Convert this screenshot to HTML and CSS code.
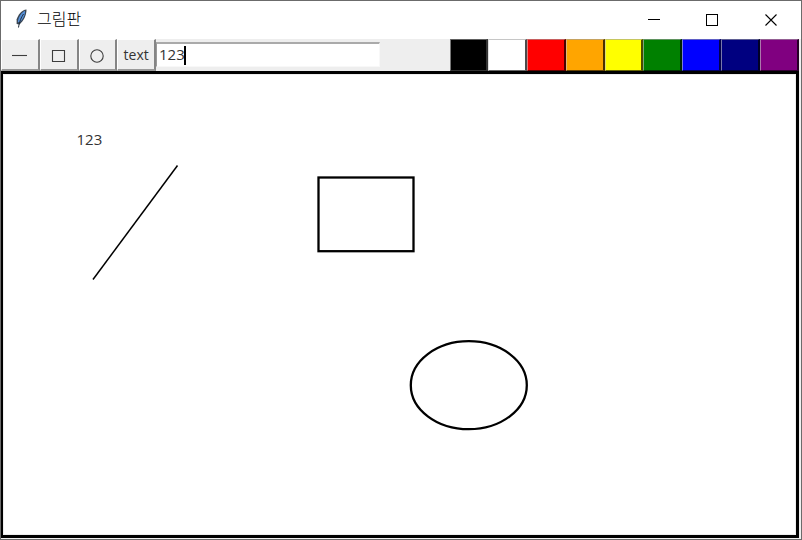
FILE: index.html
```
<!DOCTYPE html>
<html lang="ko">
<head>
<meta charset="utf-8">
<title>그림판</title>
<link rel="stylesheet" href="styles.css">
</head>
<body>
<div class="window">
  <header class="titlebar">
    <svg class="feather" width="14" height="20" viewBox="0 0 14 20">
      <path d="M12.500 .5C8 1 4 5.500 2.600 10.500L2.600 15 5.500 15.500C9.500 12 12.500 6.500 12.500 .5Z" fill="#3a4552"/>
      <path d="M11 1.800C7.500 3.500 4.600 7.500 3.800 13L5.500 13.500C9 10.500 11.300 6 11 1.800Z" fill="#5590da"/>
      <path d="M9.500 5C7.500 8 5.500 12 4.500 18.500" fill="none" stroke="#1d2936" stroke-width="1"/>
    </svg>
    <h1 class="title">그림판</h1>
    <svg class="controls" width="140" height="14" viewBox="0 0 140 14">
      <path d="M7 6.500h12M65.500 1.500h11v11h-11z"/>
      <path d="M124.500 1.500l11 11M135.500 1.500l-11 11" class="close"/>
    </svg>
  </header>
  <div class="toolbar">
    <button class="tool"><svg width="38" height="32"><path d="M11 16.500h15"/></svg></button>
    <button class="tool"><svg width="38" height="32"><path d="M12.500 11.500h12v11h-12z"/></svg></button>
    <button class="tool"><svg width="38" height="32"><circle cx="19" cy="17" r="6.200"/></svg></button>
    <button class="tool">text</button>
    <div class="entry"><span>123</span><i class="caret"></i></div>
    <div class="palette">
      <span class="swatch black"></span><span class="swatch white"></span><span class="swatch red"></span><span class="swatch orange"></span><span class="swatch yellow"></span><span class="swatch green"></span><span class="swatch blue"></span><span class="swatch navy"></span><span class="swatch purple"></span>
    </div>
  </div>
  <main class="board">
    <svg width="793" height="461" viewBox="3 74 793 461">
      <text x="76.500" y="145">123</text>
      <path d="M93 279.500 177.500 165.500" class="line"/>
      <rect x="318.500" y="177.500" width="95" height="73.700"/>
      <ellipse cx="468.800" cy="385.200" rx="58" ry="44"/>
    </svg>
  </main>
</div>
</body>
</html>
```
FILE: styles.css
```
* { box-sizing: border-box; }
body { margin: 0; background: #fff; }
.window {
  width: 802px; height: 540px;
  border: 1px solid #6b6b6b;
  background: #f0f0f0;
  display: flex; flex-direction: column;
  font-family: "Open Sans", "Noto Sans CJK KR", sans-serif;
  overflow: hidden;
}
.titlebar {
  height: 38px; flex: none;
  background: #fff;
  display: flex; align-items: center;
  padding: 0 20px 0 13px;
}
.feather { margin-top: -2px; }
.title {
  margin: -4px auto 0 9px;
  font: 300 16px/20px "Noto Sans CJK KR", sans-serif;
  color: #000;
}
.controls { fill: none; stroke: #000; stroke-width: 1; shape-rendering: crispEdges; }
.controls .close { shape-rendering: auto; stroke-width: 1.1; }
.toolbar { height: 32px; flex: none; display: flex; width: 797.6px; background: #eee; }
.tool {
  width: 38.75px; height: 32px; padding: 0;
  border: solid; border-width: 1px 2px 2px 1px;
  border-color: #fff #858585 #999 #fff;
  background: #eee; color: #333;
  font: 14px/28px "Open Sans", sans-serif;
  display: flex; align-items: center; justify-content: center;
  overflow: hidden;
}
.tool svg { flex: none; fill: none; stroke: #3d3d3d; stroke-width: 1.1; }
.entry {
  width: 224px; height: 25px; margin-top: 3px;
  border: solid; border-width: 2px 1px 1px 1px;
  border-color: #aaa #f8f8f8 #f8f8f8 #999;
  background: #fff; color: #333;
  padding-left: 2px;
  font-size: 15px; line-height: 20px;
  display: flex; align-items: center;
}
.entry span { margin-top: -2px; }
.caret { width: 2px; height: 19px; margin-left: -1px; background: #000; }
.palette { width: 349px; margin-left: auto; display: grid; grid-template-columns: repeat(9, 1fr); background: #000; }
.swatch {
  height: 32px;
  border: solid; border-width: 1px 2px 1px 1px;
  border-color: rgba(160,160,160,.6) rgba(0,0,0,.7) rgba(0,0,0,.6) rgba(200,200,200,.6);
}
.black { background: #000; border-bottom-color: #333; border-right-color: #333; }
.white { background: #fff; }
.red { background: #f00; }
.orange { background: #ffa500; }
.yellow { background: #ff0; }
.green { background: #008000; }
.blue { background: #00f; }
.navy { background: #000080; }
.purple { background: #800080; }
.board {
  width: 798px; height: 467px; flex: none;
  border: solid #000; border-width: 3px 3px 3px 2px;
  background: #fff; box-shadow: inset 0 0 0 1px #eee;
}
.board svg { display: block; fill: none; stroke: #000; stroke-width: 2.300; }
.board text { font-size: 15px; fill: #333; stroke: none; }
.board .line { stroke-width: 1.500; }
```
